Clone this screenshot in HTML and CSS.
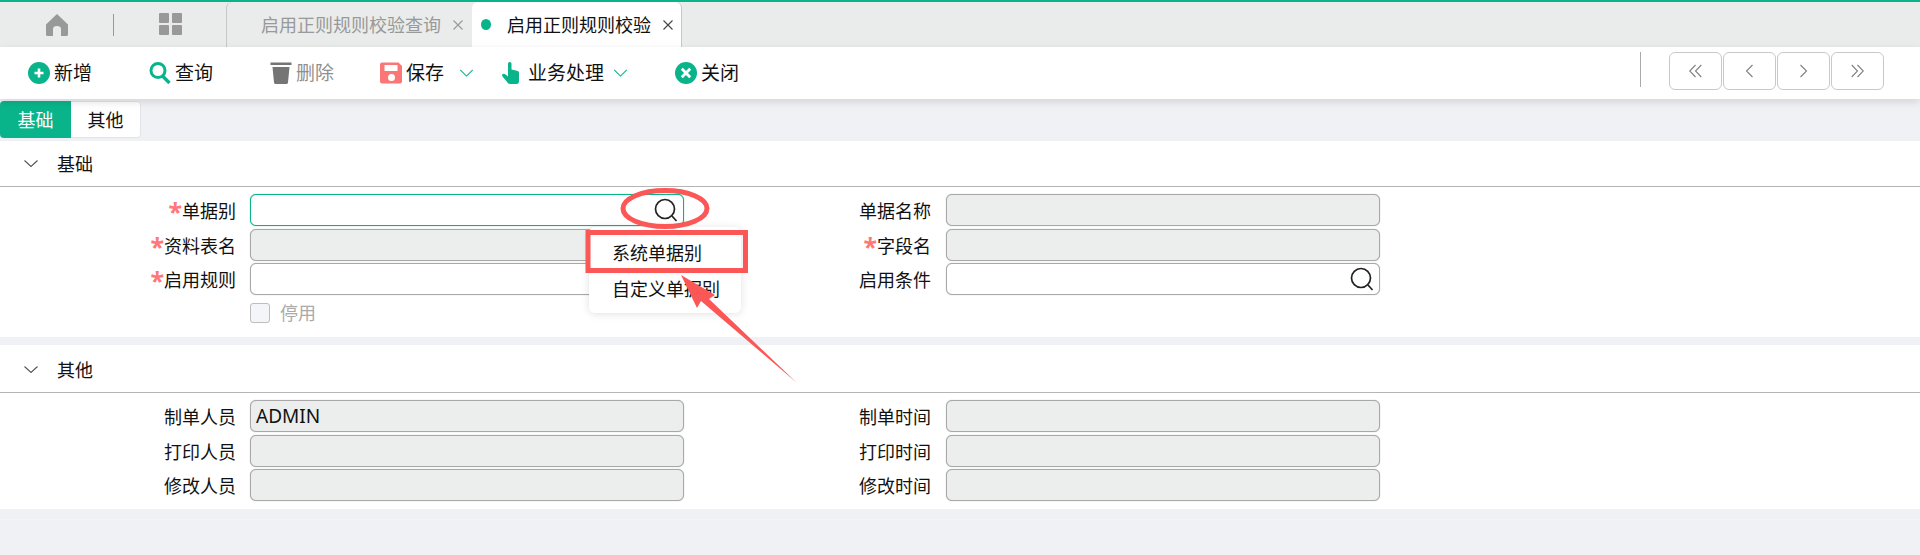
FILE: index.html
```html
<!DOCTYPE html>
<html lang="zh-CN">
<head>
    <meta charset="UTF-8">
    <title>启用正则规则校验</title>
    <link rel="stylesheet" href="styles.css">
</head>
<body>
    <!-- Tab strip -->
    <div class="tabbar">
        <div class="tab-home">
            <svg class="home-icon" viewBox="0 0 22 22"><path d="M11 0 L22 10.5 V20.5 Q22 22 20.5 22 H15 V15 Q15 12 11 12 Q7 12 7 15 V22 H1.5 Q0 22 0 20.5 V10.5 Z"/></svg>
            <span class="tab-sep"></span>
            <svg class="grid-icon" viewBox="0 0 23 22"><rect width="10" height="10" rx="1"/><rect x="13" width="10" height="10" rx="1"/><rect y="12" width="10" height="10" rx="1"/><rect x="13" y="12" width="10" height="10" rx="1"/></svg>
        </div>
        <div class="tab">
            <span class="tab-text">启用正则规则校验查询</span>
            <svg class="tab-close" viewBox="0 0 10 10"><path d="M0.5 0.5 L9.5 9.5 M9.5 0.5 L0.5 9.5"/></svg>
        </div>
        <div class="tab active">
            <span class="tab-dot"></span>
            <span class="tab-text">启用正则规则校验</span>
            <svg class="tab-close" viewBox="0 0 10 10"><path d="M0.5 0.5 L9.5 9.5 M9.5 0.5 L0.5 9.5"/></svg>
        </div>
    </div>

    <!-- Toolbar -->
    <div class="toolbar">
        <div class="tools">
            <div class="tool">
                <svg class="tool-icon" viewBox="0 0 22 22"><circle cx="11" cy="11" r="11" fill="#0ab48a"/><path d="M11 6.500 V15.500 M6.500 11 H15.500" stroke="#fff" stroke-width="2.600"/></svg>
                <span>新增</span>
            </div>
            <div class="tool">
                <svg class="tool-icon" viewBox="0 0 22 22"><circle cx="9" cy="8.500" r="7" fill="none" stroke="#0ab48a" stroke-width="3"/><path d="M13.500 14 L20.500 21" stroke="#0ab48a" stroke-width="3.400"/></svg>
                <span>查询</span>
            </div>
            <div class="tool muted">
                <svg class="tool-icon" viewBox="0 0 22 22"><path d="M0.500 0.500 H21.500 V3 H0.500 Z M2.500 5 H19.500 L18 20.500 Q17.800 22 16.300 22 H5.700 Q4.200 22 4 20.500 Z" fill="#757575"/></svg>
                <span>删除</span>
            </div>
            <div class="tool">
                <svg class="tool-icon" viewBox="0 0 22 22"><path d="M2 0.500 H18.500 L22 4 V19.500 Q22 21.500 20 21.500 H2 Q0 21.500 0 19.500 V2.500 Q0 0.500 2 0.500 Z" fill="#fb7676"/><rect x="4.500" y="3" width="13" height="6" fill="#fff"/><circle cx="11.500" cy="15.500" r="3.500" fill="#fff"/></svg>
                <span>保存</span>
                <svg class="chevron" viewBox="0 0 16 9"><path d="M1 1 L8 8 L15 1"/></svg>
            </div>
            <div class="tool">
                <svg class="tool-icon" viewBox="0 0 22 22"><path d="M6 1.500 Q6 0 7.700 0 Q9.500 0 9.500 1.500 V7.500 Q13 8 15.800 9 Q17 9.500 17 11 V19 Q17 22 14.500 22 H8 Q6.500 22 5.500 20.500 L0.500 14.500 Q-0.500 13 0.800 12 Q2 11.200 3.200 12.300 L6 14.500 Z" fill="#0ab48a"/></svg>
                <span>业务处理</span>
                <svg class="chevron near" viewBox="0 0 16 9"><path d="M1 1 L8 8 L15 1"/></svg>
            </div>
            <div class="tool">
                <svg class="tool-icon" viewBox="0 0 22 22"><circle cx="11" cy="11" r="11" fill="#0ab48a"/><path d="M6.800 6.800 L15.200 15.200 M15.200 6.800 L6.800 15.200" stroke="#fff" stroke-width="2.800"/></svg>
                <span>关闭</span>
            </div>
        </div>
        <span class="tool-sep"></span>
        <div class="pager">
            <button class="page-btn"><svg viewBox="0 0 13 14"><path d="M6.500 1 L0.700 7 L6.500 13 M12.300 1 L6.500 7 L12.300 13"/></svg></button>
            <button class="page-btn"><svg viewBox="0 0 13 14"><path d="M9.500 1 L3.500 7 L9.500 13"/></svg></button>
            <button class="page-btn"><svg viewBox="0 0 13 14"><path d="M3.500 1 L9.500 7 L3.500 13"/></svg></button>
            <button class="page-btn"><svg viewBox="0 0 13 14"><path d="M0.700 1 L6.500 7 L0.700 13 M6.500 1 L12.300 7 L6.500 13"/></svg></button>
        </div>
    </div>

    <!-- Sub tabs -->
    <div class="subtabs">
        <button class="subtab active">基础</button>
        <button class="subtab">其他</button>
    </div>

    <!-- 基础 -->
    <section class="panel first">
        <div class="panel-head">
            <svg class="panel-arrow" viewBox="0 0 14 7"><path d="M0.500 0.500 L7 6.500 L13.500 0.500"/></svg>
            <span>基础</span>
        </div>
        <div class="form">
            <label class="label"><i>*</i>单据别</label>
            <div class="field focus">
                <svg class="search" viewBox="0 0 24 24"><circle cx="11" cy="11" r="9.500"/><path d="M18 18 L22.500 23"/></svg>
            </div>
            <label class="label">单据名称</label>
            <div class="field readonly"></div>

            <label class="label"><i>*</i>资料表名</label>
            <div class="field readonly"></div>
            <label class="label"><i>*</i>字段名</label>
            <div class="field readonly"></div>

            <label class="label"><i>*</i>启用规则</label>
            <div class="field"></div>
            <label class="label">启用条件</label>
            <div class="field">
                <svg class="search" viewBox="0 0 24 24"><circle cx="11" cy="11" r="9.500"/><path d="M18 18 L22.500 23"/></svg>
            </div>

            <span></span>
            <div class="check-row">
                <span class="checkbox"></span>
                <span>停用</span>
            </div>
        </div>
    </section>

    <!-- 其他 -->
    <section class="panel">
        <div class="panel-head">
            <svg class="panel-arrow" viewBox="0 0 14 7"><path d="M0.500 0.500 L7 6.500 L13.500 0.500"/></svg>
            <span>其他</span>
        </div>
        <div class="form">
            <label class="label">制单人员</label>
            <div class="field readonly">ADMIN</div>
            <label class="label">制单时间</label>
            <div class="field readonly"></div>

            <label class="label">打印人员</label>
            <div class="field readonly"></div>
            <label class="label">打印时间</label>
            <div class="field readonly"></div>

            <label class="label">修改人员</label>
            <div class="field readonly"></div>
            <label class="label">修改时间</label>
            <div class="field readonly"></div>
        </div>
    </section>
    <div class="page-end"></div>

    <!-- Dropdown menu -->
    <div class="menu">
        <div class="menu-item">系统单据别</div>
        <div class="menu-item">自定义单据别</div>
    </div>

    <!-- Red annotations drawn on top of the screenshot -->
    <svg class="marks" viewBox="0 0 1920 555">
        <ellipse cx="665" cy="208.500" rx="42" ry="18" fill="none" stroke="#fb5757" stroke-width="5"/>
        <rect x="588" y="232.500" width="157.500" height="38" fill="none" stroke="#fb5757" stroke-width="5"/>
        <polygon points="681,275 715,295 709,299 797,383 701,301 697,308" fill="#fb5757"/>
    </svg>
</body>
</html>
```

FILE: styles.css
```css
/* Basic Reset */
* {
    box-sizing: border-box;
    margin: 0;
    padding: 0;
    --green: #0ab48a;
}

body {
    width: 1920px;
    height: 555px;
    overflow: hidden;
    position: relative;
    background-color: #eff1f5;
    color: #111;
    font-family: "Noto Sans", "Noto Sans CJK SC", sans-serif;
    font-size: 18px;
    line-height: 24px;
}

button {
    font: inherit;
    cursor: pointer;
    outline: none;
}

/* Tab strip */
.tabbar {
    display: flex;
    height: 47px;
    border-top: 2px solid var(--green);
    background-color: #e9eceb;
}

.tab-home {
    display: flex;
    align-items: center;
    width: 226px;
    padding-left: 46px;
}

.home-icon {
    width: 22px;
    height: 22px;
    fill: #999;
}

.tab-sep {
    width: 1px;
    height: 22px;
    margin-left: 45px;
    background-color: #999;
}

.grid-icon {
    width: 23px;
    height: 22px;
    margin-left: 45px;
    margin-top: -2px;
    fill: #999;
}

.tab {
    display: flex;
    align-items: center;
    width: 246px;
    padding-left: 34px;
    border-left: 1px solid #c4c8c8;
    border-top-left-radius: 6px;
    color: #999;
}

.tab .tab-close {
    margin-left: 12px;
    stroke: #999;
}

.tab.active {
    width: 210px;
    padding-left: 9px;
    border-left: none;
    border-right: 1px solid #c4c8c8;
    border-top-right-radius: 6px;
    border-top-left-radius: 6px;
    background-color: #fff;
    color: #111;
}

.tab.active .tab-close {
    stroke: #444;
}

.tab-dot {
    width: 10px;
    height: 11px;
    margin-right: 16px;
    border-radius: 50%;
    background-color: var(--green);
}

.tab-close {
    width: 10px;
    height: 10px;
    fill: none;
    stroke-width: 1.100;
}

/* Toolbar */
.toolbar {
    display: flex;
    align-items: center;
    position: relative;
    height: 52px;
    padding-left: 28px;
    background-color: #fff;
    box-shadow: 0 3px 8px rgba(0, 0, 0, 0.12);
    font-size: 19px;
}

.tools {
    display: grid;
    grid-template-columns: 121px 121px 110px 122px 173px 100px;
    margin-right: 865px;
}

.tool {
    display: flex;
    align-items: center;
    gap: 4px;
}

.tool.muted {
    color: #8f8f8f;
}

.tool-icon {
    width: 22px;
    height: 22px;
}

.chevron {
    width: 15px;
    height: 8px;
    margin-left: 11px;
    fill: none;
    stroke: var(--green);
    stroke-width: 1.200;
}

.chevron.near {
    margin-left: 5px;
}

.tool-sep {
    width: 1px;
    height: 35px;
    margin-top: -8px;
    background-color: #aaa;
}

.pager {
    display: flex;
    gap: 1.500px;
    margin-left: 28px;
    margin-top: -5px;
}

.page-btn {
    display: flex;
    align-items: center;
    justify-content: center;
    width: 52.500px;
    height: 38px;
    border: 1px solid #c9c9c9;
    border-radius: 6px;
    background-color: #fff;
}

.page-btn svg {
    width: 13px;
    height: 14px;
    fill: none;
    stroke: #808080;
    stroke-width: 1.100;
}

/* Sub tabs */
.subtabs {
    display: flex;
    height: 42px;
    padding-top: 2px;
    padding-bottom: 3px;
}

.subtab {
    width: 70px;
    border: 1px solid #e2e4e8;
    border-left: none;
    border-radius: 0 4px 4px 0;
    background-color: #fff;
    color: #111;
}

.subtab.active {
    width: 71px;
    border: none;
    border-radius: 4px 0 0 4px;
    background-color: var(--green);
    color: #fff;
}

/* Panels */
.panel {
    padding-bottom: 8px;
    background-color: #fff;
}

.panel.first {
    padding-bottom: 14px;
    margin-bottom: 8px;
}

.panel-head {
    display: flex;
    align-items: center;
    gap: 19px;
    height: 48px;
    padding-left: 24px;
    padding-top: 2px;
    border-bottom: 1px solid #b5b5b5;
}

.panel.first .panel-head {
    height: 46px;
    padding-top: 0;
}

.panel-arrow {
    width: 14px;
    height: 7px;
    fill: none;
    stroke: #555;
    stroke-width: 1.100;
}

.form {
    display: grid;
    grid-template-columns: 235px 434px 232px 434px;
    column-gap: 15px;
    row-gap: 2.500px;
    padding-top: 7px;
}

.label {
    height: 32px;
    line-height: 34px;
    text-align: right;
}

/* left column labels sit 1px closer to their field */
.label:nth-child(4n+1) {
    margin-right: -1px;
}

.label i {
    color: #ff7777;
    font-style: normal;
    font-weight: 700;
    font-size: 25px;
    vertical-align: -3px;
    line-height: 0;
}

.field {
    display: flex;
    align-items: center;
    justify-content: flex-end;
    height: 32px;
    padding: 0 5px;
    border: 1px solid #a8a8a8;
    border-radius: 6px;
    background-color: #fff;
    box-shadow: 0 0 1px #a8a8a8;
    font-size: 19px;
}

.field.readonly {
    justify-content: flex-start;
    background-color: #eceeed;
}

.field.focus {
    border-color: var(--green);
    box-shadow: 0 0 1px var(--green);
}

.search {
    width: 24px;
    height: 24px;
    fill: none;
    stroke: #222;
    stroke-width: 1.700;
}

.check-row {
    display: flex;
    align-items: center;
    gap: 10px;
    grid-column: 2;
    height: 20px;
    margin-top: 5.500px;
    color: #aaa;
}

.checkbox {
    width: 20px;
    height: 20px;
    border: 1px solid #bdbdbd;
    border-radius: 3px;
    background-color: #f4f5f9;
}

.page-end {
    margin-top: 10px;
    border-top: 1px solid #f3f4f7;
}

/* Dropdown menu */
.menu {
    position: absolute;
    left: 589px;
    top: 227px;
    width: 152px;
    height: 86px;
    padding-top: 8px;
    border-radius: 6px;
    background-color: #fff;
    box-shadow: 0 1px 8px rgba(0, 0, 0, 0.12);
}

.menu-item {
    height: 36px;
    line-height: 36px;
    padding-left: 23px;
    white-space: nowrap;
}

/* Annotations */
.marks {
    position: absolute;
    left: 0;
    top: 0;
    width: 1920px;
    height: 555px;
    pointer-events: none;
}
```
